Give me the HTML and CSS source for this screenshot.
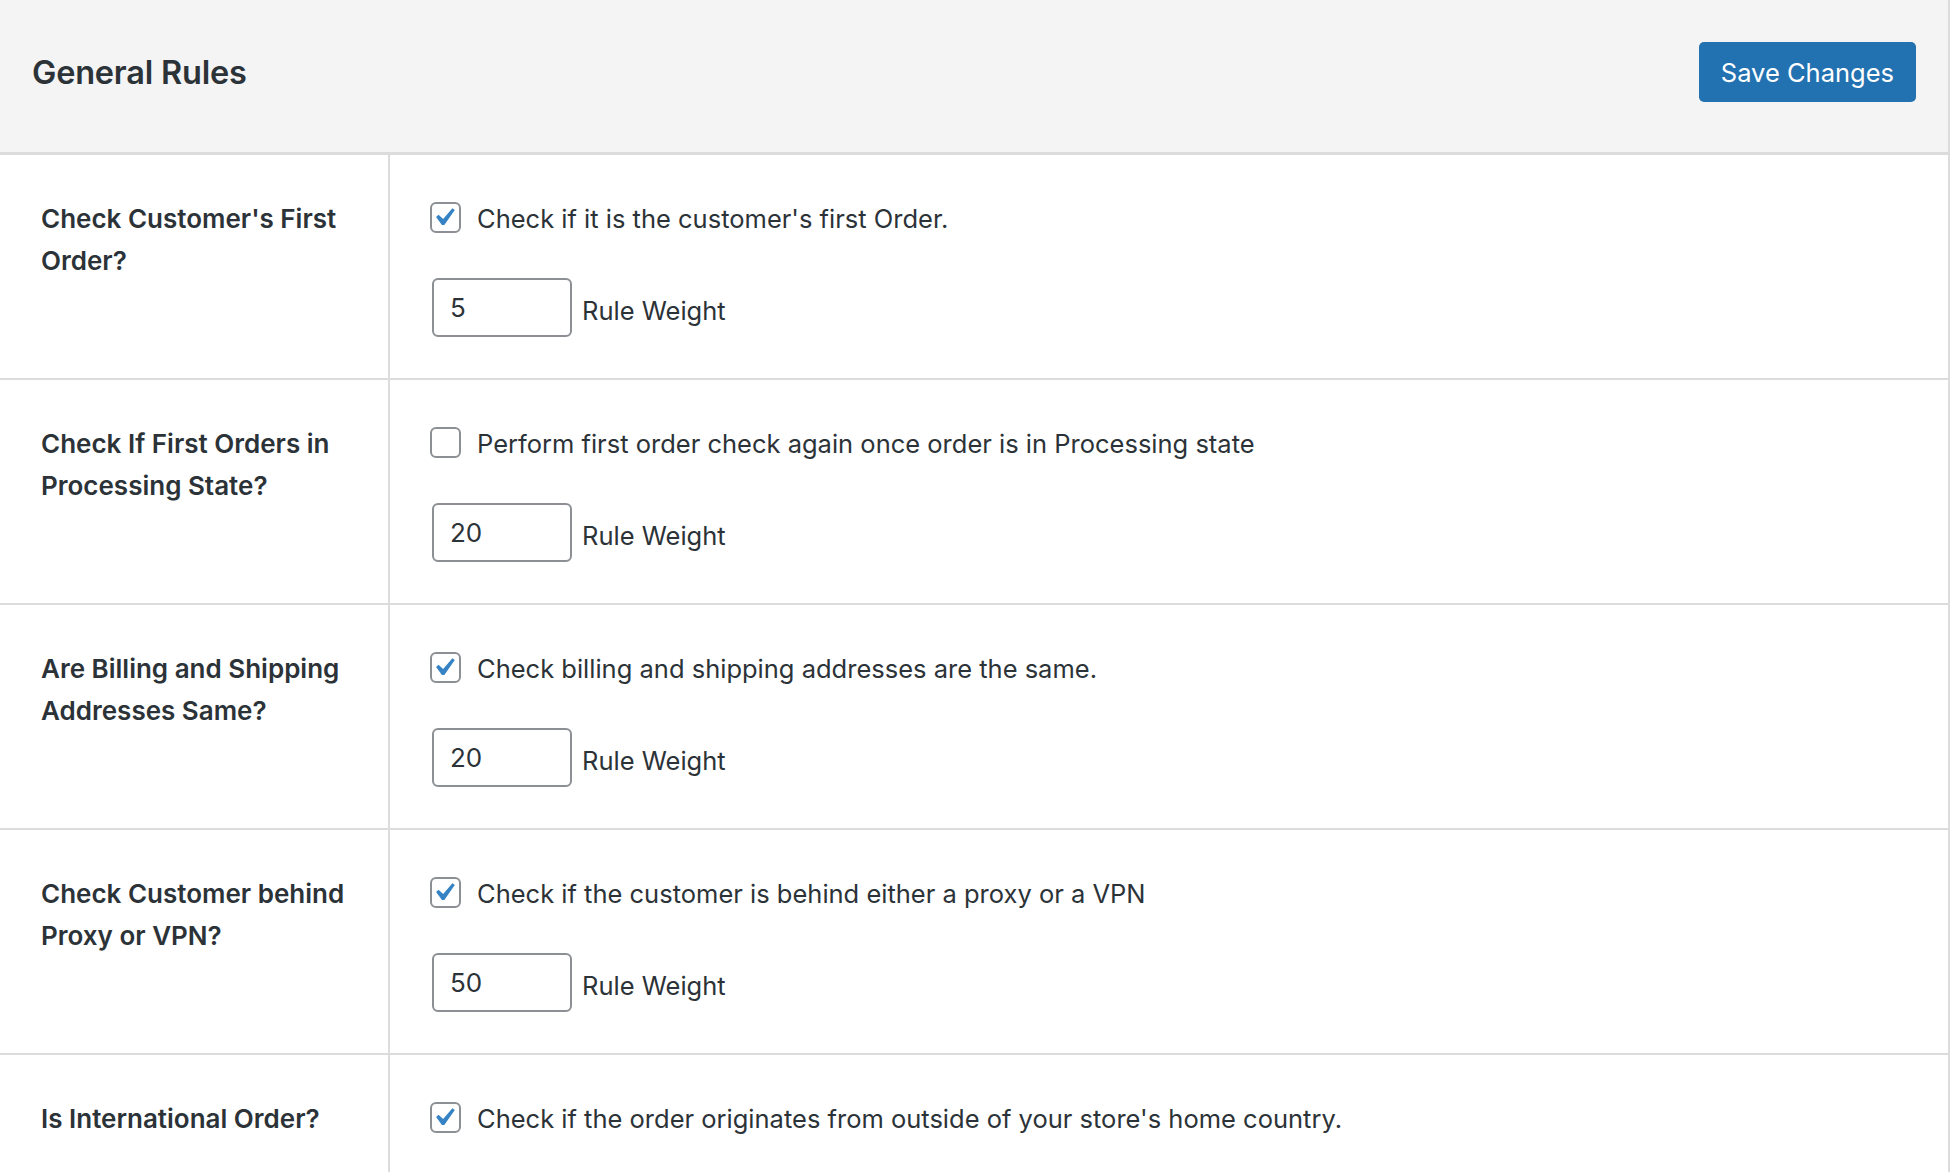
FILE: index.html
```html
<!DOCTYPE html>
<html lang="en">
<head>
<meta charset="utf-8">
<title>General Rules</title>
<link rel="stylesheet" href="styles.css">
</head>
<body>
<div class="panel">
  <header class="panel-header">
    <h2 class="panel-title">General Rules</h2>
    <button class="btn-primary" type="button">Save Changes</button>
  </header>
  <div class="rules">
    <div class="rule-row">
      <div class="rule-label">Check Customer's First Order?</div>
      <div class="rule-field">
        <label class="check-line">
          <span class="checkbox is-checked"><svg viewBox="3.5 2.5 15 15" width="27" height="27"><path d="M14.83 4.89l1.34.94-5.81 8.38H9.02L5.78 9.67l1.34-1.25 2.57 2.4z" fill="#3582c4"/></svg></span>
          <span class="check-text">Check if it is the customer's first Order.</span>
        </label>
        <div class="weight-line">
          <input class="weight-input" type="text" value="5">
          <span class="weight-text">Rule Weight</span>
        </div>
      </div>
    </div>
    <div class="rule-row">
      <div class="rule-label">Check If First Orders in Processing State?</div>
      <div class="rule-field">
        <label class="check-line">
          <span class="checkbox"></span>
          <span class="check-text">Perform first order check again once order is in Processing state</span>
        </label>
        <div class="weight-line">
          <input class="weight-input" type="text" value="20">
          <span class="weight-text">Rule Weight</span>
        </div>
      </div>
    </div>
    <div class="rule-row">
      <div class="rule-label">Are Billing and Shipping Addresses Same?</div>
      <div class="rule-field">
        <label class="check-line">
          <span class="checkbox is-checked"><svg viewBox="3.5 2.5 15 15" width="27" height="27"><path d="M14.83 4.89l1.34.94-5.81 8.38H9.02L5.78 9.67l1.34-1.25 2.57 2.4z" fill="#3582c4"/></svg></span>
          <span class="check-text">Check billing and shipping addresses are the same.</span>
        </label>
        <div class="weight-line">
          <input class="weight-input" type="text" value="20">
          <span class="weight-text">Rule Weight</span>
        </div>
      </div>
    </div>
    <div class="rule-row">
      <div class="rule-label">Check Customer behind Proxy or VPN?</div>
      <div class="rule-field">
        <label class="check-line">
          <span class="checkbox is-checked"><svg viewBox="3.5 2.5 15 15" width="27" height="27"><path d="M14.83 4.89l1.34.94-5.81 8.38H9.02L5.78 9.67l1.34-1.25 2.57 2.4z" fill="#3582c4"/></svg></span>
          <span class="check-text">Check if the customer is behind either a proxy or a VPN</span>
        </label>
        <div class="weight-line">
          <input class="weight-input" type="text" value="50">
          <span class="weight-text">Rule Weight</span>
        </div>
      </div>
    </div>
    <div class="rule-row">
      <div class="rule-label">Is International Order?</div>
      <div class="rule-field">
        <label class="check-line">
          <span class="checkbox is-checked"><svg viewBox="3.5 2.5 15 15" width="27" height="27"><path d="M14.83 4.89l1.34.94-5.81 8.38H9.02L5.78 9.67l1.34-1.25 2.57 2.4z" fill="#3582c4"/></svg></span>
          <span class="check-text">Check if the order originates from outside of your store's home country.</span>
        </label>
      </div>
    </div>
  </div>
</div>
</body>
</html>
```

FILE: styles.css
```css
* { box-sizing: border-box; }

html, body {
  margin: 0;
  padding: 0;
  background: #ffffff;
}

body {
  font-family: Inter, "Noto Sans", "Liberation Sans", sans-serif;
  color: #2c3338;
  overflow: hidden;
}

.panel {
  width: 1950px;
  border-right: 2px solid #dcdcdc;
  background: #ffffff;
}

.panel-header {
  height: 155px;
  background: #f4f4f4;
  border-bottom: 3px solid #dcdcdc;
  display: flex;
  align-items: center;
  justify-content: space-between;
  padding: 0 32px 8px 32px;
}

.panel-title {
  margin: 0;
  font-size: 32.5px;
  font-weight: 600;
  color: #2c3338;
  letter-spacing: -0.2px;
}

.btn-primary {
  height: 60px;
  padding: 0 22px;
  background: #2271b1;
  color: #ffffff;
  border: none;
  border-radius: 5px;
  font-family: inherit;
  font-size: 25.5px;
  font-weight: 400;
}

.rule-row {
  display: grid;
  grid-template-columns: 390px 1fr;
  border-bottom: 2px solid #dcdcdc;
}

.rule-label {
  border-right: 2px solid #dcdcdc;
  padding: 43px 20px 40px 41px;
  font-size: 26px;
  font-weight: 600;
  line-height: 42px;
  color: #2c3338;
}

.rule-field {
  padding: 47px 20px 41px 40px;
  font-size: 25.5px;
  line-height: 32px;
}

.check-line {
  display: flex;
  align-items: center;
  gap: 16px;
  height: 31px;
}

.checkbox {
  width: 31px;
  height: 31px;
  flex: 0 0 31px;
  border: 2px solid #8c8f94;
  border-radius: 6px;
  background: #ffffff;
  display: flex;
  align-items: center;
  justify-content: center;
  overflow: hidden;
}

.checkbox svg {
  width: 27px;
  height: 27px;
  flex: 0 0 27px;
  display: block;
}

.check-text {
  color: #2c3338;
  padding-top: 2px;
  white-space: nowrap;
}

.weight-line {
  display: flex;
  align-items: flex-end;
  gap: 10px;
  margin-top: 45px;
}

.weight-input {
  width: 140px;
  height: 59px;
  border: 2px solid #8c8f94;
  border-radius: 6px;
  padding: 0 16px;
  font-family: inherit;
  font-size: 26px;
  color: #2c3338;
  background: #ffffff;
  margin-left: 2px;
}

.weight-text {
  padding-bottom: 10px;
  color: #2c3338;
}
```
